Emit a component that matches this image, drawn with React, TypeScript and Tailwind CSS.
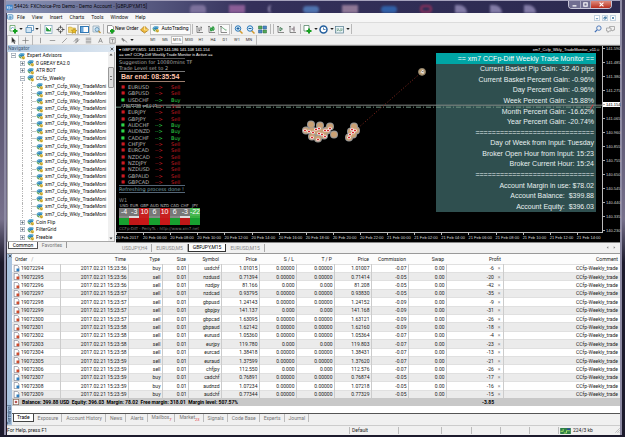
import type { ReactNode } from "react";
import { clsx } from "clsx";

const uiFont = "font-[Roboto,'Open_Sans',sans-serif]";
const arial = "font-['Liberation_Sans',Arial,sans-serif]";
const verdana = "font-['DejaVu_Sans',Verdana,sans-serif]";

const menus = ["File", "View", "Insert", "Charts", "Tools", "Window", "Help"];
const periods = ["M1", "M5", "M15", "M30", "H1", "H4", "D1", "W1", "MN"];

const pairs = [
  ["EURUSD", "Sell"],
  ["GBPUSD", "Sell"],
  ["USDCHF", "Buy"],
  ["#19072299 sell 0.01", "Sell"],
  ["EURJPY", "Sell"],
  ["GBPJPY", "Sell"],
  ["AUDCHF", "Buy"],
  ["AUDNZD", "Buy"],
  ["CADCHF", "Buy"],
  ["CHFJPY", "Sell"],
  ["EURCAD", "Sell"],
  ["NZDCAD", "Sell"],
  ["NZDJPY", "Sell"],
  ["NZDUSD", "Sell"],
  ["GBPAUD", "Sell"],
  ["GBPCAD", "Sell"],
];

const strengths = [
  { name: "USD", value: "-4", top: "bg-[#777]", low: "border-[#888] bg-[#18a030]" },
  { name: "EUR", value: "-3", top: "bg-[#777]", low: "border-[#ddd] bg-[#c01818]" },
  { name: "GBP", value: "10", top: "bg-[#c82020]", low: "border-[#c82020] bg-[#c81818]" },
  { name: "AUD", value: "6", top: "bg-[#777]", low: "border-[#888] bg-[#18a030]" },
  { name: "NZD", value: "10", top: "bg-[#c82020]", low: "border-[#c82020] bg-[#c81818]" },
  { name: "CAD", value: "6", top: "bg-[#777]", low: "border-[#888] bg-[#18a030]" },
  { name: "CHF", value: "-3", top: "bg-[#777]", low: "border-[#ddd] bg-[#c01818]" },
  { name: "JPY", value: "-22", top: "bg-[#48b850]", low: "border-[#38b040] bg-[#18a030]" },
];

const line = "=============================";
const monitor = [
  "Current Basket Pip Gain: -32.40 pips",
  "Current Basket Percent Gain: -0.96%",
  "Day Percent Gain: -0.96%",
  "Week Percent Gain: -15.88%",
  "Month Percent Gain: -16.62%",
  "Year Percent Gain: -20.74%",
  line,
  "Day of Week from Input: Tuesday",
  "Broker Open Hour from Input: 15:23",
  "Broker Current Hour: 15:24",
  line,
  "Account Margin in use: $78.02",
  "Account Balance:  $399.88",
  "Account Equity:  $396.03",
];

const currentPrice = "141.154";
const prices = [
  "141.590", "141.485", "141.380", "141.275", currentPrice, "141.065", "140.960",
  "140.855", "140.755", "140.650", "140.545", "140.440", "140.335", "140.230",
];

const times = [
  "20 Feb 2017", "20 Feb 06:00", "20 Feb 08:00", "20 Feb 10:00", "20 Feb 12:00", "20 Feb 14:00",
  "20 Feb 16:00", "20 Feb 18:00", "20 Feb 20:00", "20 Feb 22:00", "21 Feb 00:00", "21 Feb 02:00",
  "21 Feb 04:00", "21 Feb 06:00", "21 Feb 08:00", "21 Feb 10:00", "21 Feb 12:00", "21 Feb 14:00",
];

const markers = [
  [311, 125], [320, 126], [330, 127], [306, 131], [334, 135], [312, 137], [318, 139], [324, 136],
  [312, 131], [317, 132], [322, 132], [327, 131], [354, 127], [356, 131], [351, 132], [349, 138], [353, 135],
];
const arrows = [
  [305, 131], [309, 132], [313, 133], [316, 130], [319, 129], [319, 134], [312, 138], [318, 140], [322, 135],
  [325, 137], [325, 131], [328, 131], [330, 129], [350, 135], [353, 133], [349, 138], [352, 130], [355, 131],
];

const columns = [
  { name: "Order", width: "w-[48px]" },
  { name: "Time", width: "w-[68px]" },
  { name: "Type", width: "w-[34px]" },
  { name: "Size", width: "w-[26px]" },
  { name: "Symbol", width: "w-[33px]" },
  { name: "Price", width: "w-[38px]" },
  { name: "S / L", width: "w-[37px]" },
  { name: "T / P", width: "w-[38px]" },
  { name: "Price", width: "w-[37px]" },
  { name: "Commission", width: "w-[37px]" },
  { name: "Swap", width: "w-[38px]" },
  { name: "Profit", width: "w-[57px]" },
  { name: "Comment", width: "" },
];

const orders = [
  ["19072294", "56", "buy", "usdchf", "1.01015", "1.01007", "-0.07", "-6"],
  ["19072295", "56", "sell", "nzdusd", "0.71394", "0.71414", "-0.05", "-20"],
  ["19072296", "56", "sell", "nzdjpy", "81.166", "81.208", "-0.05", "-42"],
  ["19072297", "57", "sell", "nzdcad", "0.93795", "0.93830", "-0.05", "-35"],
  ["19072298", "57", "sell", "gbpusd", "1.24143", "1.24152", "-0.09", "-9"],
  ["19072299", "57", "sell", "gbpjpy", "141.137", "141.168", "-0.09", "-31"],
  ["19072300", "57", "sell", "gbpcad", "1.63095", "1.63121", "-0.09", "-26"],
  ["19072301", "58", "sell", "gbpaud", "1.62142", "1.62160", "-0.09", "-18"],
  ["19072302", "58", "sell", "eurusd", "1.05360", "1.05364", "-0.07", "-4"],
  ["19072303", "58", "sell", "eurjpy", "119.780", "119.803", "-0.07", "-23"],
  ["19072304", "58", "sell", "eurcad", "1.38418", "1.38431", "-0.07", "-13"],
  ["19072305", "59", "sell", "euraud", "1.37599", "1.37620", "-0.07", "-21"],
  ["19072306", "59", "sell", "chfjpy", "112.550", "112.576", "-0.07", "-26"],
  ["19072307", "59", "buy", "cadchf", "0.76891", "0.76874", "-0.05", "-17"],
  ["19072308", "59", "buy", "audnzd", "1.07234", "1.07218", "-0.05", "-16"],
  ["19072309", "59", "buy", "audchf", "0.77344", "0.77329", "-0.05", "-15"],
];

const terminalTabs = [
  { name: "Trade" },
  { name: "Exposure" },
  { name: "Account History" },
  { name: "News" },
  { name: "Alerts" },
  { name: "Mailbox", count: "7" },
  { name: "Market", count: "23" },
  { name: "Signals" },
  { name: "Code Base" },
  { name: "Experts" },
  { name: "Journal" },
];

function Icon({ children, className = "h-[9px] w-[9px]" }: { children: ReactNode; className?: string }) {
  return (
    <svg viewBox="0 0 18 18" className={clsx("shrink-0", className)} fill="none" aria-hidden="true">
      {children}
    </svg>
  );
}

function ToolButton({ label, pressed, children }: { label: string; pressed?: boolean; children: ReactNode }) {
  return (
    <button
      aria-label={label}
      className={clsx(
        "flex h-[11px] w-3 shrink-0 items-center justify-center",
        pressed && "border border-[#c4c4c4] bg-[#fafafa]",
      )}
    >
      {children}
    </button>
  );
}

function Drop() {
  return (
    <Icon className="h-1 w-1">
      <path d="M1 5h16L9 14z" fill="#222" />
    </Icon>
  );
}

function Sep() {
  return <span className="mx-px h-[10px] w-px shrink-0 bg-[#b8b8b8]" />;
}

function ExpertIcon() {
  return (
    <Icon className="h-2 w-2">
      <path d="M1 8c2-5 7-8 14-4l-2 6-5 1z" fill="#2f86b8" />
      <path d="M3 7c3-3 6-4 10-2" stroke="#9bd4ec" strokeWidth="2" />
      <path d="M1 8l6 3 1 4c-4 0-6-3-7-7z" fill="#59a05c" />
      <circle cx="12" cy="13" r="4" fill="#e0bd45" />
      <path d="M10 12l3 3" stroke="#76621c" strokeWidth="1.5" />
    </Icon>
  );
}

function Magnifier({ sign }: { sign: string }) {
  return (
    <Icon>
      <path d="M11 11l6 6" stroke="#d39a2c" strokeWidth="3" />
      <circle cx="8" cy="7" r="5.5" fill="#d7effc" stroke="#2c77b8" strokeWidth="2" />
      <path d={sign} stroke="#205f9c" strokeWidth="2" />
    </Icon>
  );
}

function ChartAxes({ path, color }: { path: string; color: string }) {
  return (
    <Icon>
      <path d="M4 2v13h12M2 4l2-2 2 2" stroke="#666" strokeWidth="1.5" />
      <path d={path} stroke={color} strokeWidth="2" />
    </Icon>
  );
}

function TitleBar() {
  return (
    <header className="flex h-[13px] items-center overflow-hidden border-t border-[#a6a3bd] bg-linear-to-r from-[#8c96b8] via-[#34305a] via-40% to-[#2c2a50]">
      <Icon className="h-[7px] w-[7px]">
        <rect x="1" y="2" width="16" height="14" rx="2" fill="#3e86cc" />
        <path d="M4 12V6m4 8V5m5 7V7" stroke="#fff" strokeWidth="2" />
      </Icon>
      <h1 className="ml-px whitespace-nowrap text-[5px] text-[#08080f]">
        54426: FXChoice-Pro Demo - Demo Account - [GBPJPY,M15]
      </h1>
      <div className="flex h-full flex-1 items-end justify-around pl-8 pr-5 blur-[1px]">
        <span className="h-2 w-4 rounded-t bg-[#7c719c]" />
        <span className="h-2 w-4 bg-[#8a5d96]" />
        <span className="h-2 w-3 rounded-full border-l-2 border-[#9a91b7]" />
        <span className="h-[7px] w-4 rounded bg-[#4f72ad]" />
        <span className="h-2 w-4 bg-[#8e7796]" />
        <span className="h-[7px] w-4 rounded bg-[#315fa5]" />
        <span className="h-2 w-3 rounded-full border-2 border-[#8d315d]" />
        <span className="h-2 w-3 rounded-tr-lg bg-[#827ba6]" />
        <span className="h-2 w-3 rounded-tr-lg bg-[#827ba6]" />
        <span className="h-2 w-3 rounded-tr-lg bg-[#827ba6]" />
      </div>
      <div className="mr-2 flex h-2 self-start overflow-hidden rounded-b-sm border border-t-0 border-[#c8c6d8] text-white">
        <button aria-label="Minimize" className="flex w-[11px] items-center justify-center bg-[#706d90]">
          <Icon className="h-[5px] w-[5px]"><path d="M2 14h14" stroke="#fff" strokeWidth="5" /></Icon>
        </button>
        <button aria-label="Maximize" className="flex w-[11px] items-center justify-center border-x border-[#aaa8c0] bg-[#706d90]">
          <Icon className="h-[5px] w-[5px]"><rect x="3" y="3" width="12" height="12" stroke="#fff" strokeWidth="4" /></Icon>
        </button>
        <button aria-label="Close" className="flex w-[20px] items-center justify-center bg-linear-to-b from-[#dd8a7c] to-[#b82a1c]">
          <Icon className="h-[5px] w-[5px]"><path d="M2 2l14 14M16 2L2 16" stroke="#fff" strokeWidth="4" /></Icon>
        </button>
      </div>
    </header>
  );
}

function MenuBar() {
  return (
    <nav className="flex h-[9px] items-center bg-[#f6f6f6] pr-1 text-[5px] text-[#111]">
      <Icon className="mr-[3px] h-[7px] w-[7px]">
        <rect x="1" y="2" width="14" height="11" rx="2" fill="#dff1fb" stroke="#3b7fb8" strokeWidth="2" />
        <path d="M4 8h9M8 5v9" stroke="#3b7fb8" strokeWidth="2" />
      </Icon>
      <div className="flex gap-[7px]">
        {menus.map((menu) => (
          <button key={menu}>{menu}</button>
        ))}
      </div>
      <div className="ml-auto flex gap-[2px]">
        {["M4 12h10", "M4 7h8v7H4zM7 7V4h8v7h-3", "M4 4l10 10M14 4L4 14"].map((d, i) => (
          <button key={d} aria-label={["Minimize chart", "Restore chart", "Close chart"][i]} className="border border-[#c3d2df] bg-white">
            <Icon className="h-1 w-1"><path d={d} stroke="#1c5d90" strokeWidth="3" /></Icon>
          </button>
        ))}
      </div>
    </nav>
  );
}

function MainToolbar() {
  return (
    <div className="flex h-[13px] items-center border-t border-[#dcdcdc] bg-[#f0f0f0] pr-1">
      <ToolButton label="New chart">
        <Icon>
          <path d="M2 1h10v11H2z" fill="#fff" stroke="#5a9a5c" strokeWidth="1.5" />
          <path d="M4 8l3-4 3 3" stroke="#4a87b8" strokeWidth="1.5" />
          <path d="M12 8v9M8 12h9" stroke="#17a020" strokeWidth="4" />
        </Icon>
      </ToolButton>
      <Drop />
      <ToolButton label="Profiles">
        <Icon>
          <path d="M5 1h12v10H5z" fill="#fff" stroke="#4a83b0" strokeWidth="1.5" />
          <path d="M2 5h11v10H2z" fill="#cfe5f5" stroke="#4a83b0" strokeWidth="1.5" />
        </Icon>
      </ToolButton>
      <Drop />
      <Sep />
      <ToolButton label="Market watch">
        <Icon>
          <rect x="2" y="1" width="14" height="16" fill="#fff" stroke="#7aa0b8" strokeWidth="1.5" />
          <path d="M5 5v7h7zM13 13V6" fill="#249a3a" stroke="#249a3a" strokeWidth="1.5" />
        </Icon>
      </ToolButton>
      <ToolButton label="Data window">
        <Icon>
          <circle cx="9" cy="9" r="5" stroke="#555" strokeWidth="1.5" />
          <path d="M9 1v6m0 4v6M1 9h6m4 0h6" stroke="#555" strokeWidth="2" />
        </Icon>
      </ToolButton>
      <ToolButton label="Navigator" pressed>
        <Icon>
          <path d="M1 4h6l2 2h6v9H1z" fill="#f3d66b" stroke="#b8962c" />
          <path d="M12 7l2 3 4 1-3 2v4l-3-2-4 2 1-4-2-3h4z" fill="#ecbc25" stroke="#9d7d18" />
        </Icon>
      </ToolButton>
      <ToolButton label="Terminal" pressed>
        <Icon>
          <rect x="1" y="3" width="16" height="12" fill="#fff" stroke="#3278b4" strokeWidth="2" />
          <path d="M2 4h5v10H2z" fill="#6aa8dc" />
        </Icon>
      </ToolButton>
      <ToolButton label="Strategy tester">
        <Icon>
          <path d="M2 2h12v12H2z" fill="#e6eff5" stroke="#8aa3b4" strokeWidth="1.5" />
          <circle cx="10" cy="9" r="4" fill="#bfe0f4" stroke="#5587aa" strokeWidth="1.5" />
          <path d="M13 12l4 4" stroke="#c09030" strokeWidth="2.5" />
        </Icon>
      </ToolButton>
      <Sep />
      <button className="flex items-center whitespace-nowrap pl-px text-[5px] text-black">
        <Icon>
          <path d="M3 1h9l3 3v12H3z" fill="#fff" stroke="#777" strokeWidth="1.5" />
          <path d="M12 8v9M8 12h9" stroke="#17a020" strokeWidth="4" />
        </Icon>
        New Order
      </button>
      <ToolButton label="MetaEditor">
        <Icon>
          <path d="M9 2l8 8-8 6-8-6z" fill="#edb83c" stroke="#a87616" strokeWidth="1.5" />
          <path d="M9 2v8l8 0" stroke="#fff0b0" strokeWidth="1.5" />
        </Icon>
      </ToolButton>
      <button className="flex h-[11px] items-center gap-px whitespace-nowrap border border-[#c4c4c4] bg-[#fafafa] px-px text-[5px] text-black">
        <ExpertIcon />
        AutoTrading
      </button>
      <Sep />
      <ToolButton label="Bar chart"><ChartAxes path="M8 5v8M12 3v8M8 11h2M12 5h2" color="#777" /></ToolButton>
      <ToolButton label="Candlesticks"><ChartAxes path="M8 4v9M12 2v10M7 7h3v4H7zM11 5h3v5h-3z" color="#2c9a40" /></ToolButton>
      <ToolButton label="Line chart" pressed><ChartAxes path="M5 6c4-3 5 5 10 4" color="#57a468" /></ToolButton>
      <Sep />
      <ToolButton label="Zoom in"><Magnifier sign="M8 4v6M5 7h6" /></ToolButton>
      <ToolButton label="Zoom out"><Magnifier sign="M5 7h6" /></ToolButton>
      <ToolButton label="Tile windows">
        <Icon>
          <path d="M1 2h7v6H1zM10 10h7v6h-7z" fill="#54a858" stroke="#2c6c38" />
          <path d="M10 2h7v6h-7zM1 10h7v6H1z" fill="#4c86c4" stroke="#275a90" />
        </Icon>
      </ToolButton>
      <Sep />
      <Sep />
      <ToolButton label="Auto scroll"><ChartAxes path="M8 5l5 3-5 4z" color="#47805a" /></ToolButton>
      <ToolButton label="Chart shift"><ChartAxes path="M12 3v10M7 8h4" color="#71606a" /></ToolButton>
      <Sep />
      <ToolButton label="Indicators">
        <Icon>
          <path d="M2 1h10v11H2z" fill="#fff" stroke="#4e8060" strokeWidth="1.5" />
          <path d="M12 7v10M7 12h10" stroke="#17a020" strokeWidth="4" />
        </Icon>
      </ToolButton>
      <Drop />
      <ToolButton label="Periods">
        <Icon>
          <circle cx="9" cy="9" r="7" fill="#fff" stroke="#235f9e" strokeWidth="3" />
          <path d="M9 5v4h4" stroke="#235f9e" strokeWidth="1.5" />
        </Icon>
      </ToolButton>
      <Drop />
      <ToolButton label="Templates">
        <Icon>
          <rect x="1" y="3" width="16" height="13" fill="#e9f4f8" stroke="#5d8295" strokeWidth="1.5" />
          <path d="M3 8h5m2 0h5M3 12l4-2 3 2 5-2" stroke="#5d9070" strokeWidth="1.5" />
        </Icon>
      </ToolButton>
      <Drop />
      <Sep />
      <div className="ml-auto flex">
        <ToolButton label="Search">
          <Icon className="h-2 w-2">
            <circle cx="11" cy="7" r="5" stroke="#3e6db4" strokeWidth="2" />
            <path d="M7 11l-5 5" stroke="#3e6db4" strokeWidth="3" />
          </Icon>
        </ToolButton>
        <ToolButton label="Chat">
          <Icon>
            <path d="M1 6h9v6H6l-2 3v-3H1zM7 6V3h10v7h-3v2l-4-2" stroke="#999" strokeWidth="1.5" />
          </Icon>
        </ToolButton>
      </div>
    </div>
  );
}

const drawTools = [
  { label: "Cursor", d: "M5 1v13l3-3 3 6 2-1-3-5h4z", fill: "#222" },
  { label: "Crosshair", d: "M9 1v16M1 9h16" },
  { label: "Vertical line", d: "M9 2v14" },
  { label: "Horizontal line", d: "M2 9h14" },
  { label: "Trendline", d: "M3 15L15 3" },
  { label: "Channel", d: "M2 12l9-9M6 16L16 6M8 4v12M12 3v10" },
  { label: "Fibonacci", d: "M2 3h14M2 7h14M2 11h14M2 15h14" },
  { label: "Text", d: "M4 15L9 3l5 12M6 11h6" },
  { label: "Text label", d: "M2 2h14v14H2zM5 6h8M9 6v8" },
  { label: "Arrows", d: "M3 3l6 5-2 3-5-5zM10 9l6 5", fill: "#888" },
];

function DrawToolbar() {
  return (
    <div className="flex h-[10px] items-center border-y border-[#dcdcdc] bg-[#f0f0f0] text-[4px] text-[#333]">
      {drawTools.map((tool, i) => (
        <div key={tool.label} className="flex items-center">
          <ToolButton label={tool.label} pressed={i === 0}>
            <Icon className="h-[7px] w-[7px]">
              <path d={tool.d} stroke="#666" strokeWidth="1.5" fill={tool.fill ?? "none"} />
            </Icon>
          </ToolButton>
          {i === 1 && <Sep />}
        </div>
      ))}
      <Drop />
      <div className="ml-2 mr-[3px]"><Sep /></div>
      {periods.map((period) => (
        <button
          key={period}
          className={clsx(
            "h-2 w-3 text-center leading-[6px]",
            period === "M15" && "border border-[#c4c4c4] bg-white",
          )}
        >
          {period}
        </button>
      ))}
      <Sep />
    </div>
  );
}

function TreeBox({ open }: { open?: boolean }) {
  return (
    <span className="flex w-[9px] shrink-0 justify-center">
      <Icon className="h-[5px] w-[5px]">
        <rect x="1" y="1" width="16" height="16" fill="#fff" stroke="#8998a8" strokeWidth="2" />
        <path d={open ? "M4 9h10" : "M4 9h10M9 4v10"} stroke="#345" strokeWidth="2" />
      </Icon>
    </span>
  );
}

function TreeRow({ level, text, open }: { level: number; text: string; open?: boolean }) {
  return (
    <li className="flex items-center whitespace-nowrap pl-px">
      {level === 1 && <span className="w-[9px] shrink-0" />}
      {level < 2 && <TreeBox open={open} />}
      {level === 2 && (
        <>
          <span className="ml-[13px] h-full w-[9px] shrink-0 border-l border-dotted border-[#b4b4b4]" />
          <span className="flex h-full w-[5px] shrink-0 items-center border-l border-dotted border-[#b4b4b4]">
            <span className="h-px w-[5px] bg-[#c4c4c4]" />
          </span>
        </>
      )}
      <span className="flex w-[9px] shrink-0"><ExpertIcon /></span>
      <span>{text}</span>
    </li>
  );
}

function Navigator() {
  return (
    <aside className="flex w-[108px] shrink-0 flex-col bg-white text-[5px] text-[#111]">
      <div className="flex h-[7px] shrink-0 items-center justify-between bg-linear-to-r from-[#b4c9df] to-[#dde7f1] px-px text-[#405a78]">
        Navigator
        <button aria-label="Close navigator">
          <Icon className="h-1 w-1"><path d="M3 3l12 12M15 3L3 15" stroke="#222" strokeWidth="3" /></Icon>
        </button>
      </div>
      <div className="flex h-[190px] border border-t-0 border-[#a8a8a8]">
        <ul className="grid flex-1 auto-rows-fr overflow-hidden leading-[7px]">
          <TreeRow level={0} text="Expert Advisors" open />
          <TreeRow level={1} text="0 GREAY EA2.0" />
          <TreeRow level={1} text="ATR BOT" />
          <TreeRow level={1} text="CCfp_Weekly" open />
          {Array.from({ length: 18 }, (_, i) => (
            <TreeRow key={i} level={2} text="xm7_Ccfp_Wkly_TradeMoni" />
          ))}
          <TreeRow level={1} text="Coin Flip" />
          <TreeRow level={1} text="FilterGrid" />
          <TreeRow level={1} text="Freebie" />
        </ul>
        <div className="flex w-[6px] shrink-0 flex-col items-center justify-between bg-[#f0f0f0]">
          <Icon className="h-[5px] w-1"><path d="M2 13L9 5l7 8z" fill="#444" /></Icon>
          <div className="mb-auto mt-[10px] flex h-[21px] w-full items-center justify-center rounded-[1px] border border-[#999] bg-[#ddd]">
            <span className="h-1 w-[2px] border-y border-[#777]" />
          </div>
          <Icon className="h-[5px] w-1"><path d="M2 5h14l-7 8z" fill="#444" /></Icon>
        </div>
      </div>
      <div className="flex flex-1 items-start bg-[#f0f0f0] leading-[6px] text-[#777]">
        <button className="ml-px w-[30px] border border-t-0 border-[#555] bg-white text-black">Common</button>
        <button className="w-[29px] border-r border-[#999]">Favorites</button>
      </div>
    </aside>
  );
}

function Signals() {
  return (
    <section className="ml-[3px] w-[66px] pt-px text-[5px] leading-[6px] text-[#a9a9a9]">
      <p className={clsx(arial, "whitespace-nowrap text-[4px] leading-[5px] text-white")}>
        ▾ GBPJPY,M15&nbsp; 141.129 141.186 141.108 141.154
      </p>
      <p className={clsx(arial, "h-[6px] whitespace-nowrap text-[4px] text-white")}>
        == xm7 CCFp-Diff Weekly Trade Monitor is Active ==
      </p>
      <p className="whitespace-nowrap border-t border-[#555]">Suggestion for 10080mins TF</p>
      <p className="border-b border-[#777]">Trade Level set to 2</p>
      <p className={clsx(arial, "border-b border-[#a08070] pl-0.5 text-[7px] font-bold leading-[9px] text-[#ffc3ac]")}>
        Bar end: 08:35:54
      </p>
      <ul className="mt-[2px] grid h-[101px] auto-rows-fr items-center pl-0.5">
        {pairs.map(([pair, side]) => (
          <li key={pair} className={clsx("flex items-center", side === "Buy" ? "text-[#2fd44a]" : "text-[#c81c24]")}>
            {pair.startsWith("#") ? (
              <span className={clsx(arial, "w-[34px] whitespace-nowrap text-[4px] text-white")}>{pair}</span>
            ) : (
              <>
                <span className="w-[7px] text-[4px]">■</span>
                <span className="w-[27px] text-[#b4b4b4]">{pair}</span>
              </>
            )}
            <span className="w-[16px] whitespace-nowrap">--&gt;</span>
            <span>{side}</span>
          </li>
        ))}
      </ul>
      <p className="whitespace-nowrap border-y border-[#567] text-[#7fa8b0]">Refreshing process done !</p>
      <p className="mt-[4px] text-[#888]">W1</p>
      <div className="flex w-[81px]">
        {strengths.map((item) => (
          <div key={item.name} className="flex-1 text-center">
            <p className="h-[5px] text-[4px] leading-[5px] text-[#bbb]">{item.name}</p>
            <p className={clsx(item.top, arial, "h-2 text-[7px] leading-2 text-white")}>{item.value}</p>
            <p className={clsx(item.low, "h-[9px] border-t-2")} />
          </div>
        ))}
      </div>
      <p className="mt-px whitespace-nowrap text-[4px] leading-[5px] text-[#777]">CCFp-Diff - PeriyTs : http://www.xm7.net</p>
    </section>
  );
}

function Chart() {
  return (
    <section className={clsx(verdana, "border-t border-[#888] bg-black")}>
      <div className="flex h-[187px]">
        <div className="relative flex flex-1 justify-between border-b border-r border-[#bbb]">
          <Signals />
          <div className={clsx(arial, "mr-[6px] flex w-[160px] flex-col text-right text-[7px] text-[#e8efef]")}>
            <p className="-mr-1 h-[7px] pt-px text-[4px] leading-[6px] text-white">xm7_Ccfp_Wkly_TradeMonitor_v11☺</p>
            <h2 className="h-[11px] whitespace-nowrap bg-[#00a5a5] pr-0.5 leading-[11px] text-white">
              == xm7 CCFp-Diff Weekly Trade Monitor ==
            </h2>
            <ul className="grid h-[148px] auto-rows-fr items-center bg-[#2f4f4f] pr-0.5 leading-[10px]">
              {monitor.map((text, i) => (
                <li key={i} className="whitespace-pre">{text}</li>
              ))}
            </ul>
          </div>
          <svg
            viewBox="116 46 486 187"
            preserveAspectRatio="none"
            className="pointer-events-none absolute inset-0 h-full w-full"
            aria-label="Open orders on the chart"
          >
            <path d="M156 105.5H602" stroke="#858a85" />
            <path d="M116 107.5H602" stroke="#6f9684" strokeDasharray="5 2 1 2" />
            <path d="M422 72L354 132" stroke="#862a20" strokeDasharray="1 2" />
            {markers.map(([x, y]) => (
              <circle key={`${x}-${y}`} cx={x} cy={y} r="4" fill="#999" />
            ))}
            {markers.map(([x, y]) => (
              <circle key={`${x}-${y}`} cx={x} cy={y} r="3" fill="#c9a074" />
            ))}
            {arrows.map(([x, y]) => (
              <g key={`${x}-${y}`}>
                <circle cx={x} cy={y} r="1.7" fill="#fff" />
                <circle cx={x} cy={y} r="1" fill="#d01818" />
              </g>
            ))}
            <circle cx="422" cy="72" r="3.5" fill="#bda078" stroke="#8c8068" />
            <path d="M423 70l-2 2.5h2.500M423 70v4" stroke="#fff" strokeWidth=".8" />
            <path d="M590 110l3-5" stroke="#e04040" />
          </svg>
        </div>
        <div className={clsx(arial, "flex w-[17px] flex-col justify-between text-[4px] leading-[5px] text-[#d0d0d0]")}>
          {prices.map((price) => (
            <span key={price} className={clsx("whitespace-nowrap", price === currentPrice && "bg-white text-black")}>
              <span className="mr-px inline-block h-px w-[2px] bg-[#aaa] align-middle" />
              {price}
            </span>
          ))}
        </div>
      </div>
      <div className={clsx(arial, "flex h-[9px] pr-[16px] text-[4px] leading-[6px] text-[#d8d8d8]")}>
        {times.map((time) => (
          <span key={time} className="flex-1 whitespace-nowrap">
            <span className="block h-[2px] w-px bg-[#bbb]" />
            {time}
          </span>
        ))}
      </div>
    </section>
  );
}

function ChartTabs() {
  return (
    <div className="flex h-[10px] items-center border-t border-[#888] bg-[#f0f0f0] pl-0.5 text-[5px] leading-[6px] text-[#888]">
      {["USDJPY,H4", "EURUSD,M5", "GBPJPY,M15", "EURUSD,M15"].map((tab) => (
        <button
          key={tab}
          className={clsx(
            "h-2 border-r px-1",
            tab === "GBPJPY,M15" ? "border-x border-b border-[#333] bg-white text-black" : "border-[#aaa]",
          )}
        >
          {tab}
        </button>
      ))}
      <span className="ml-auto mr-1 flex gap-1">
        <button aria-label="Previous tab"><Icon className="h-[3px] w-[3px]"><path d="M14 2v14L4 9z" fill="#888" /></Icon></button>
        <button aria-label="Next tab"><Icon className="h-[3px] w-[3px]"><path d="M4 2v14l10-7z" fill="#888" /></Icon></button>
      </span>
    </div>
  );
}

function OrderIcon({ side }: { side: string }) {
  return (
    <Icon className="h-[7px] w-[7px]">
      <path d="M3 1h8l4 4v12H3z" fill="#fff" stroke="#667" strokeWidth="1.5" />
      <path d="M9 9h7v7H9z" fill={side === "buy" ? "#2f7fc0" : "#cf4a2c"} />
    </Icon>
  );
}

function OrdersTable() {
  return (
    <table className="h-[152px] w-full table-fixed border-collapse bg-white text-right text-[5px] leading-[6px] text-[#222]">
      <colgroup>
        {columns.map((col, i) => (
          <col key={i} className={col.width} />
        ))}
      </colgroup>
      <thead>
        <tr className="h-[10px] bg-[#fcfcfc]">
          {columns.map((col, i) => (
            <th key={i} className={clsx("pr-0.5 font-normal", i === 0 && "pl-[3px] text-left")}>
              {col.name}
              {i === 0 && <span className="pl-1 text-[#999]">/</span>}
            </th>
          ))}
        </tr>
      </thead>
      <tbody>
        {orders.map(([id, sec, side, symbol, open, price, commission, profit]) => {
          const stop = open.split(".")[1].length === 3 ? "0.000" : "0.00000";
          const cells = [`2017.02.21 15:23:${sec}`, side, "0.01", symbol, open, stop, stop, price, commission, "0.00"];
          return (
            <tr key={id} className="border-t border-[#e0e0e0] even:bg-[#ebebeb]">
              <td className="border-r border-[#ccc] pl-px">
                <span className="flex items-center gap-px"><OrderIcon side={side} />{id}</span>
              </td>
              {cells.map((cell, i) => (
                <td key={i} className="whitespace-nowrap border-r border-[#ccc] pr-px">{cell}</td>
              ))}
              <td className="border-r border-[#ccc] pr-0.5">
                {profit}
                <button aria-label={`Close order ${id}`} className="pl-1 text-[#888]">×</button>
              </td>
              <td className="whitespace-nowrap pr-0.5">CCfp-Weekly_trade</td>
            </tr>
          );
        })}
      </tbody>
      <tfoot>
        <tr className="h-2 bg-[#c8c8c8] font-bold text-black">
          <td colSpan={11} className="pl-px text-left">
            <span className="flex items-center gap-[3px] whitespace-pre">
              <Icon className="h-[6px] w-[6px]">
                <rect x="1" y="1" width="16" height="16" fill="#fff" stroke="#865" strokeWidth="2" />
                <circle cx="9" cy="9" r="4" fill="#b55" />
              </Icon>
              {"Balance: 399.88 USD  Equity: 396.03  Margin: 78.02  Free margin: 318.01  Margin level: 507.57%"}
            </span>
          </td>
          <td className="pr-[9px]">-3.85</td>
          <td />
        </tr>
      </tfoot>
    </table>
  );
}

function Terminal() {
  return (
    <section className="flex border-t border-[#999] bg-[#f0f0f0]">
      <div className="flex w-[5px] shrink-0 flex-col items-center justify-between bg-[#a9c4e0] pb-px text-[5px] leading-[5px] text-[#223c60]">
        <button aria-label="Close terminal">
          <Icon className="h-1 w-1"><path d="M3 3l12 12M15 3L3 15" stroke="#222" strokeWidth="3" /></Icon>
        </button>
        <span className="rotate-180 [writing-mode:vertical-rl]">Terminal</span>
      </div>
      <div className="min-w-0 flex-1">
        <OrdersTable />
        <div className="h-[7px] bg-white" />
        <div className="flex h-3 items-start border-t border-[#555] text-[5px] leading-[7px] text-[#777]">
          {terminalTabs.map((tab, i) => (
            <button
              key={tab.name}
              className={clsx(
                "h-2 whitespace-nowrap",
                i === 0 ? "ml-px border border-t-0 border-[#444] bg-white px-[3px] text-black" : "border-r border-[#bbb] pl-1 pr-[3px]",
              )}
            >
              {tab.name}
              {tab.count && <span className="align-sub text-[4px] leading-[4px] text-[#d33]">{tab.count}</span>}
            </button>
          ))}
        </div>
      </div>
    </section>
  );
}

function StatusBar() {
  return (
    <footer className="flex h-[10px] items-center border-t border-[#ccc] bg-[#f0f0f0] text-[5px] leading-[7px] text-[#222]">
      <span className="flex-1">For Help, press F1</span>
      <span className="w-[49px] border-l border-[#bbb] pl-0.5">Default</span>
      <span className="h-[7px] w-[43px] border-l border-[#bbb]" />
      <span className="h-[7px] w-[30px] border-l border-[#bbb]" />
      <span className="h-[7px] w-[29px] border-l border-[#bbb]" />
      <span className="h-[7px] w-[29px] border-l border-[#bbb]" />
      <span className="h-[7px] w-[29px] border-l border-[#bbb]" />
      <span className="flex w-[57px] items-center gap-0.5 border-l border-[#bbb] pl-px">
        <Icon className="h-[6px] w-[11px]">
          <rect x="-7" y="0" width="32" height="18" fill="#2f7f48" />
          <path d="M-6 10h8V3M4 15h8V8h10" stroke="#9edc62" strokeWidth="3" />
          <path d="M14 4h9" stroke="#2848a0" strokeWidth="5" />
        </Icon>
        224/3 kb
      </span>
      <Icon className="h-[5px] w-[5px]"><path d="M17 1L1 17M17 8l-9 9M17 14l-3 3" stroke="#999" strokeWidth="2" /></Icon>
    </footer>
  );
}

export default function App() {
  return (
    <main className={clsx(uiFont, "min-h-screen bg-linear-to-b from-[#413c58] via-[#77718c] via-50% to-[#1c1a2c] to-60% pb-[3px] pl-1 pr-[3px]")}>
      <div className="border-l-2 border-r-2 border-[#8d8aa3]">
        <TitleBar />
        <div className="pl-px">
          <MenuBar />
          <MainToolbar />
          <DrawToolbar />
          <div className="flex bg-[#f0f0f0]">
            <Navigator />
            <div className="ml-px min-w-0 flex-1">
              <Chart />
              <ChartTabs />
            </div>
          </div>
          <div className="h-px bg-[#f0f0f0]" />
          <Terminal />
          <StatusBar />
        </div>
      </div>
    </main>
  );
}
